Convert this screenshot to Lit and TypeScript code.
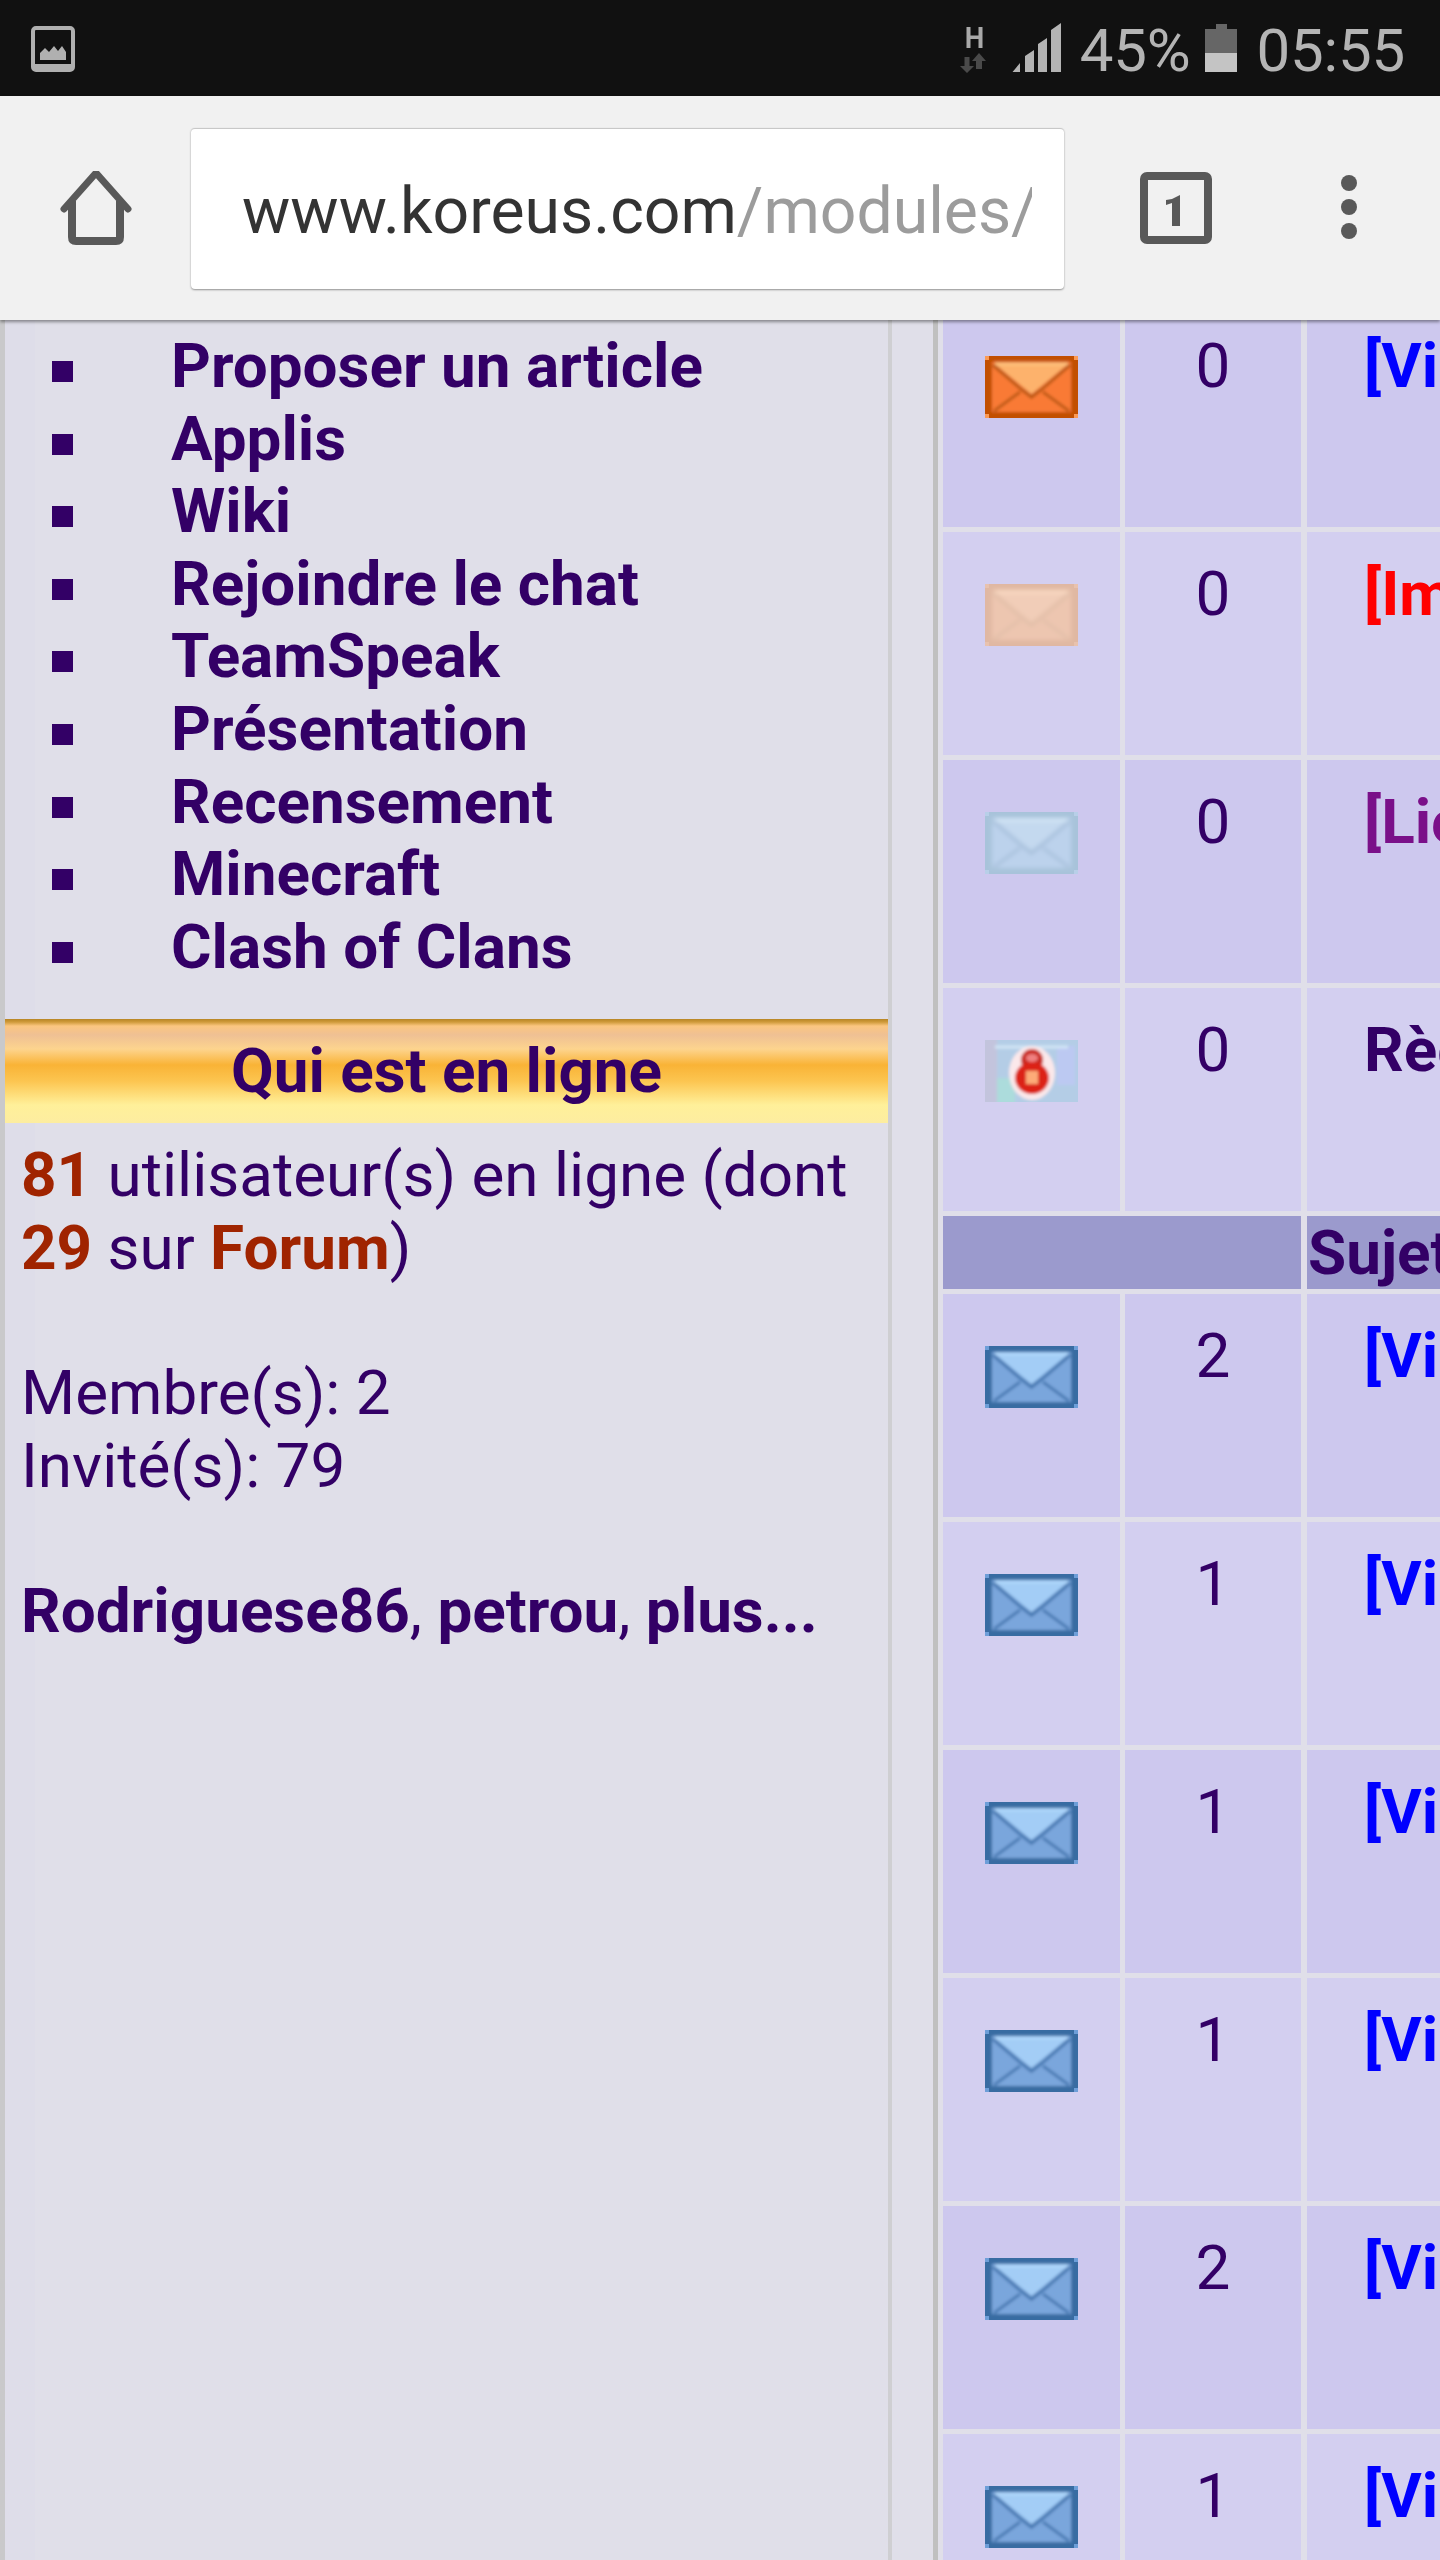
import { LitElement, html, css } from "lit";
import { customElement } from "lit/decorators.js";

type Env = { id: string; blur: number; rim: string; body: string; flap: string; line: string; hi: string; corner: string };
const ORANGE: Env = { id: "o", blur: 1.8, rim: "#c25000", body: "#f97a34", flap: "#fdb26c", line: "#c05a18", hi: "#fdc27e", corner: "#fb9a55" };
const PEACH: Env = { id: "p", blur: 2, rim: "#e0b8a2", body: "#edc6b0", flap: "#f1cdb8", line: "#e2bfa9", hi: "#fbdcc4", corner: "#e8c2ae" };
const PALE: Env = { id: "w", blur: 2, rim: "#a8c3da", body: "#bcd2ec", flap: "#c4d9ef", line: "#a9c1dc", hi: "#d6e8f7", corner: "#b8cfe8" };
const BLUE: Env = { id: "u", blur: 1.8, rim: "#386ca2", body: "#7aa6dc", flap: "#a3cdf6", line: "#4b7cb4", hi: "#b0d8fb", corner: "#6d9ed8" };

const envelope = (c: Env) => html`<svg class="env" width="93" height="62" viewBox="0 0 93 62">
  <defs><filter id="b${c.id}" x="-5%" y="-5%" width="110%" height="110%"><feGaussianBlur stdDeviation="${c.blur}" /></filter>
  <clipPath id="c${c.id}"><rect width="93" height="62" /></clipPath></defs>
  <g clip-path="url(#c${c.id})">
    <rect width="93" height="62" fill="${c.rim}" />
    <g filter="url(#b${c.id})">
      <rect x="-4" y="-4" width="101" height="70" fill="${c.rim}" />
      <rect x="7" y="6" width="79" height="50" fill="${c.body}" />
      <path d="M10 8 H83 L46.5 38 Z" fill="${c.flap}" />
      <path d="M10 8 H83" stroke="${c.hi}" stroke-width="3" />
      <path d="M8 9 L36 33 L46.5 41 L57 33 L85 9" fill="none" stroke="${c.line}" stroke-width="3.5" />
      <path d="M9 55 L35 36 M84 55 L58 36" fill="none" stroke="${c.line}" stroke-width="3" />
    </g>
    <rect x="0" y="0" width="4" height="4" fill="${c.corner}" /><rect x="89" y="0" width="4" height="4" fill="${c.corner}" />
    <rect x="0" y="58" width="4" height="4" fill="${c.corner}" /><rect x="89" y="58" width="4" height="4" fill="${c.corner}" />
  </g></svg>`;

const lockIcon = html`<svg class="env" width="93" height="62" viewBox="0 0 93 62">
  <defs><filter id="bl" x="-5%" y="-5%" width="110%" height="110%"><feGaussianBlur stdDeviation="1.6" /></filter>
  <clipPath id="cl"><rect width="93" height="62" /></clipPath></defs>
  <g clip-path="url(#cl)">
  <rect width="93" height="62" fill="#b7cfe8" />
  <g filter="url(#bl)">
    <rect x="-4" y="-4" width="101" height="70" fill="#b4cde6" />
    <path d="M-2 -2 H12 V64 H-2 Z" fill="#c3c4dd" />
    <path d="M72 6 H90 V45 H72 Z" fill="#bcc9f2" />
    <path d="M12 38 H30 V64 H12 Z" fill="#acdcdc" />
    <path d="M10 7 H83" stroke="#d2e6f6" stroke-width="3" />
    <ellipse cx="47" cy="33" rx="23" ry="27" fill="#fbe8ea" />
    <ellipse cx="47" cy="20" rx="11" ry="11" fill="#c92a22" />
    <ellipse cx="47" cy="18" rx="6" ry="4" fill="#f08080" />
    <ellipse cx="47" cy="38" rx="17" ry="16" fill="#dc2418" />
    <rect x="41" y="31" width="12" height="13" fill="#fdab78" />
  </g></g></svg>`;

const items = ["Proposer un article", "Applis", "Wiki", "Rejoindre le chat", "TeamSpeak", "Présentation", "Recensement", "Minecraft", "Clash of Clans"];

type Row = { icon: unknown; n: string; title: string; cls: string };
const row = (icon: unknown, n: string, title: string, cls = "blue"): Row => ({ icon, n, title, cls });
const top: Row[] = [
  row(envelope(ORANGE), "0", "[Vidéo]"),
  row(envelope(PEACH), "0", "[Image]", "red"),
  row(envelope(PALE), "0", "[Lien]", "purple"),
  row(lockIcon, "0", "Règles", "plain"),
];
const bottom: Row[] = [
  row(envelope(BLUE), "2", "[Vidéo]"),
  row(envelope(BLUE), "1", "[Vidéo]"),
  row(envelope(BLUE), "1", "[Vidéo]"),
  row(envelope(BLUE), "1", "[Vidéo]"),
  row(envelope(BLUE), "2", "[Vidéo]"),
  row(envelope(BLUE), "1", "[Vidéo]"),
];

@customElement("app-root")
export class AppRoot extends LitElement {
  static styles = css`
    :host { display: block; width: 1440px; height: 2560px; overflow: hidden; background: #e0dfe9; font-family: Roboto, sans-serif; color: #330066; }
    .status { height: 96px; background: #111; display: flex; align-items: center; padding: 0 35px 0 31px; box-sizing: border-box; justify-content: space-between; }
    .status-left { display: flex; margin-top: 1px; }
    .status-right { display: flex; align-items: center; }
    .st-text { font-size: 60px; color: #b4b4b4; line-height: 96px; letter-spacing: -0.2px; padding-top: 5px; }
    .pct { margin-left: 18px; }
    .clock { margin-left: 20px; }
    .batt { margin-left: 14px; }
    .toolbar { height: 224px; background: #f1f1f1; display: flex; align-items: center; box-sizing: border-box; position: relative; z-index: 2; box-shadow: 0 2px 3px rgba(0,0,0,.4); }
    .home { margin-left: 60px; flex: none; }
    .url { margin-left: 57px; width: 873px; height: 161px; margin-top: 1px; background: #fff; border-radius: 4px; box-sizing: border-box; border-top: 1px solid #c8c8c8; box-shadow: 0 1px 2px rgba(0,0,0,.4); padding: 0 32px 0 51px; display: flex; align-items: center; }
    .url-clip { overflow: hidden; white-space: nowrap; font-size: 64.3px; color: #333; width: 100%; line-height: 100px; padding-top: 3px; }
    .url-clip span { color: #9c9c9c; }
    .tab { margin-left: 76px; flex: none; }
    .menu { margin-left: 128px; flex: none; }
    .page { display: flex; height: 2240px; overflow: hidden; background: #e0dfe9; }
    aside { width: 892px; flex: none; box-sizing: border-box; border-left: 5px solid #c9c9cb; border-right: 4px solid #cfcfd2; background: linear-gradient(90deg, #dedde9 30px, #e0dfe9 30px); }
    ul { margin: 0; padding: 10px 0 0 166px; list-style: none; }
    li { font-size: 62px; line-height: 72.6px; font-weight: 700; position: relative; white-space: nowrap; }
    li::before { content: ""; position: absolute; left: -119px; top: 31px; width: 21px; height: 21px; background: #330066; }
    .head { margin-top: 36px; height: 104px; line-height: 104px; text-align: center; font-size: 62px; font-weight: 700; background: linear-gradient(180deg, #b78524 0, #cf9a3a 3px, #fbc680 7px, #efc094 16px, #fdd48e 30px, #f9b336 46px, #fcc550 62px, #fff09a 86px, #fdeda0 104px); }
    .who { padding: 0 0 0 16px; font-size: 62px; line-height: 72.6px; margin-top: 16px; }
    .who b.r { color: #a02400; }
    .who .gap { height: 72.6px; }
    .side { flex: none; width: 41px; }
    .table { flex: 1; border-left: 5px solid #c0c0c0; padding-left: 5px; margin-top: -16px; display: grid; grid-template-columns: 177px 176px 1fr; column-gap: 5px; row-gap: 5px; grid-template-rows: repeat(4, 223px) 73px; grid-auto-rows: 223px; overflow: hidden; align-content: start; }
    .cell { background: #cdc8ee; overflow: hidden; }
    .cell.alt { background: #d3cff0; }
    .c-icon { padding: 52px 0 0 42px; box-sizing: border-box; }
    .env { display: block; }
    .c-n { text-align: center; font-size: 62px; line-height: 72.6px; padding-top: 26px; }
    .c-t { font-size: 62px; line-height: 72.6px; padding: 26px 0 0 57px; font-weight: 700; white-space: nowrap; margin-left: 1px; }
    .blue { color: #0000ff; } .red { color: #ff0000; } .purple { color: #7a1089; } .plain { color: #330066; }
    .hd { background: #9b9acd; height: 73px; overflow: hidden; }
    .hd.span { grid-column: span 2; }
    .hd.t { font-size: 62px; font-weight: 700; line-height: 73px; padding-left: 1px; white-space: nowrap; margin-left: 1px; }
  `;

  private rows(rows: Row[], start: number) {
    return rows.map((r, i) => {
      const alt = (i + start) % 2 === 1 ? "alt" : "";
      return html`<div class="cell c-icon ${alt}">${r.icon}</div>
        <div class="cell c-n ${alt}">${r.n}</div>
        <div class="cell c-t ${alt} ${r.cls}">${r.title}</div>`;
    });
  }

  render() {
    return html`
      <div class="status">
        <div class="status-left">
          <svg width="44" height="46" viewBox="0 0 44 46"><rect x="2" y="2" width="40" height="42" rx="3" fill="none" stroke="#b0b0b0" stroke-width="4" /><rect x="2" y="38" width="40" height="7" fill="#b0b0b0" /><path d="M9 34 V27 L14 22 L18 26 L23 20 L27 25 L31 20 L35 26 V34 Z" fill="#b0b0b0" /></svg>
        </div>
        <div class="status-right">
          <svg width="102" height="50" viewBox="959 23 102 50">
            <path d="M965.5 27 H969.5 V35.5 H977.5 V27 H981.5 V48 H977.5 V39 H969.5 V48 H965.5 Z" fill="#a9a9a9" />
            <path d="M963.5 57 H968.5 V66 H973 L966 73 L959 66 H963.5 Z" fill="#4a4a4a" />
            <path d="M978 53 L985 61 H981 V69 H975 V61 H971 Z" fill="#4a4a4a" />
            <path d="M1011.5 72 L1019 63 V72 Z M1024 56 L1033 50 V72 H1024 Z M1037 44 L1046 38 V72 H1037 Z M1050 30 L1060 23 V72 H1050 Z" fill="#b4b4b4" />
          </svg>
          <span class="st-text pct">45%</span>
          <svg class="batt" width="32" height="48" viewBox="0 0 32 48"><path d="M11 0 H22 V5 H32 V29 H0 V5 H11 Z" fill="#666" /><rect y="29" width="32" height="19" fill="#c4c4c4" /></svg>
          <span class="st-text clock">05:55</span>
        </div>
      </div>
      <div class="toolbar">
        <svg class="home" width="74" height="74" viewBox="0 0 74 74"><path d="M4 38 L36 2 L68 38" fill="none" stroke="#595959" stroke-width="7" stroke-linecap="round" stroke-linejoin="miter" /><path d="M12 30 V66 Q12 70 16 70 H56 Q60 70 60 66 V30" fill="none" stroke="#595959" stroke-width="8" /></svg>
        <div class="url"><div class="url-clip">www.koreus.com<span>/modules/newbb/viewforum.php</span></div></div>
        <svg class="tab" width="72" height="72" viewBox="0 0 72 72"><rect x="4" y="4" width="64" height="64" rx="3" fill="none" stroke="#595959" stroke-width="8" /><path d="M32 27 L40 23 V54 H32 V31 L26 33 V28 Z" fill="#595959" /></svg>
        <svg class="menu" width="18" height="66" viewBox="0 0 18 66"><ellipse cx="9" cy="8" rx="8" ry="8" fill="#595959" /><ellipse cx="9" cy="32" rx="8" ry="8" fill="#595959" /><ellipse cx="9" cy="56" rx="8" ry="8" fill="#595959" /></svg>
      </div>
      <div class="page">
        <aside>
          <ul>${items.map((t) => html`<li>${t}</li>`)}</ul>
          <div class="head">Qui est en ligne</div>
          <div class="who">
            <div><b class="r">81</b> utilisateur(s) en ligne (dont</div>
            <div><b class="r">29</b> sur <b class="r">Forum</b>)</div>
            <div class="gap"></div>
            <div>Membre(s): 2</div>
            <div>Invité(s): 79</div>
            <div class="gap"></div>
            <div><b>Rodriguese86</b>, <b>petrou</b>, <b>plus...</b></div>
          </div>
        </aside>
        <div class="side"></div>
        <div class="table">
          ${this.rows(top, 0)}
          <div class="hd span"></div><div class="hd t">Sujet</div>
          ${this.rows(bottom, 0)}
        </div>
      </div>
    `;
  }
}
